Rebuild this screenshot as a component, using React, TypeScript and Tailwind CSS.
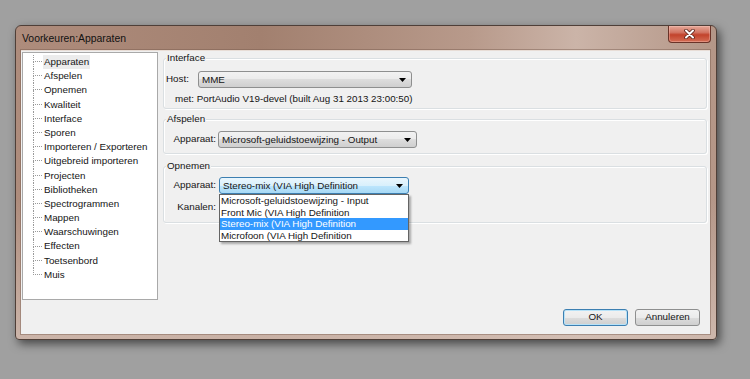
import React from 'react'

const TREE_ITEMS = [
  'Apparaten',
  'Afspelen',
  'Opnemen',
  'Kwaliteit',
  'Interface',
  'Sporen',
  'Importeren / Exporteren',
  'Uitgebreid importeren',
  'Projecten',
  'Bibliotheken',
  'Spectrogrammen',
  'Mappen',
  'Waarschuwingen',
  'Effecten',
  'Toetsenbord',
  'Muis',
]

const RECORD_DEVICES = [
  'Microsoft-geluidstoewijzing - Input',
  'Front Mic (VIA High Definition',
  'Stereo-mix (VIA High Definition',
  'Microfoon (VIA High Definition',
]

// ── Root ─────────────────────────────────────────────────────────────────────

export default function App() {
  return (
    <div className="w-[750px] h-[379px] bg-[#a0a0a0] pt-[25px] pl-[15px] font-['Liberation_Sans',Arial,sans-serif] text-[9.8px] text-[#151515] overflow-hidden">
      <div className="w-[702px] h-[315px] flex flex-col rounded-t-[6px] rounded-b-[4px] border border-[#4f3f38] bg-[linear-gradient(180deg,rgba(0,0,0,0)_55%,rgba(214,194,184,0.75)),linear-gradient(90deg,#ae8c7c,#a2806f_35%,#b89a8b_65%,#cbb4a8_80%,#b49687)] shadow-[3px_4px_10px_rgba(0,0,0,0.55)]">
        {/* Title bar */}
        <div className="h-[24px] flex justify-between shrink-0">
          <div className="pl-[6px] pt-[5px] text-[10.4px] text-[#111]">Voorkeuren:Apparaten</div>
          <CloseButton />
        </div>

        {/* Client area */}
        <div className="ml-[5px] mr-[6px] mb-[5px] flex-1 flex flex-col bg-[#f0f0f0] border-t border-[#e8ddd6] pl-[1px] shadow-[0_0_0_1px_rgba(120,90,78,0.45)]">
          <div className="flex">
            <Tree />

            <div className="ml-[5px] w-[544px] flex flex-col">
              {/* Interface */}
              <GroupBox label="Interface" className="mt-[7px] h-[51px]">
                <div className="flex items-center mt-[7px] pl-[2px]">
                  <span className="w-[32px]">Host:</span>
                  <Combo value="MME" className="w-[214px]" />
                </div>
                <div className="mt-[5px] pl-[11px] leading-[12px]">
                  met: PortAudio V19-devel (built Aug 31 2013 23:00:50)
                </div>
              </GroupBox>

              {/* Afspelen */}
              <GroupBox label="Afspelen" className="mt-[10px] h-[35px]">
                <div className="flex items-center mt-[6px]">
                  <span className="w-[52px] text-right">Apparaat:</span>
                  <Combo
                    value="Microsoft-geluidstoewijzing - Output"
                    className="ml-[2px] w-[199px]"
                  />
                </div>
              </GroupBox>

              {/* Opnemen */}
              <GroupBox label="Opnemen" className="mt-[12px] h-[57px]">
                <div className="flex items-center mt-[5px]">
                  <span className="w-[52px] text-right">Apparaat:</span>
                  <div className="relative ml-[3px]">
                    <Combo
                      value="Stereo-mix (VIA High Definition"
                      className="w-[190px]"
                      focused
                    />
                    <DropList />
                  </div>
                </div>
                <div className="flex items-center mt-[5px]">
                  <span className="w-[52px] text-right">Kanalen:</span>
                  <Combo value="" className="ml-[3px] w-[190px]" />
                </div>
              </GroupBox>
            </div>
          </div>

          {/* Buttons */}
          <div className="mt-auto mb-[8px] mr-[10px] flex justify-end gap-[7px]">
            <DialogButton label="OK" isDefault />
            <DialogButton label="Annuleren" />
          </div>
        </div>
      </div>
    </div>
  )
}

// ── Window chrome ────────────────────────────────────────────────────────────

function CloseButton() {
  return (
    <div className="mr-[5px] w-[43px] h-[17px] flex items-center justify-center rounded-b-[4px] border border-t-0 border-[#6a3328] bg-[linear-gradient(180deg,#e6a898,#d27563_40%,#c2432c_55%,#d46d55)] shadow-[inset_0_0_0_1px_rgba(255,210,200,0.35)]">
      <svg width="11" height="10" viewBox="0 0 11 10">
        <path d="M2 1.5l7 7M9 1.5l-7 7" stroke="#5b2218" strokeWidth="3.6" strokeLinecap="round" />
        <path d="M2 1.5l7 7M9 1.5l-7 7" stroke="#ffffff" strokeWidth="2" strokeLinecap="round" />
      </svg>
    </div>
  )
}

// ── Tree ─────────────────────────────────────────────────────────────────────

function Tree() {
  return (
    <div className="mt-[1px] w-[136px] h-[248px] bg-white border border-[#a9a9a9] pt-[2px] pl-[10px]">
      {TREE_ITEMS.map((item, i) => {
        const last = i === TREE_ITEMS.length - 1
        return (
          <div key={item} className="flex h-[14.2px]">
            <div className="w-[9px] flex flex-col">
              <div className="h-1/2 border-l border-b border-dotted border-[#9a9a9a]" />
              <div className={last ? 'h-1/2' : 'h-1/2 border-l border-dotted border-[#9a9a9a]'} />
            </div>
            <span
              className={`ml-[1px] px-[1px] leading-[14.2px] whitespace-nowrap ${
                i === 0 ? 'bg-[#ececec]' : ''
              }`}
            >
              {item}
            </span>
          </div>
        )
      })}
    </div>
  )
}

// ── Controls ─────────────────────────────────────────────────────────────────

function GroupBox({
  label,
  className,
  children,
}: {
  label: string
  className: string
  children: React.ReactNode
}) {
  return (
    <div
      className={`flex flex-col rounded-[3px] border border-[#dadfe2] shadow-[inset_1px_1px_0_#ffffff,1px_1px_0_#ffffff] ${className}`}
    >
      <div className="-mt-[7px] ml-[2px] self-start h-[12px] leading-[12px] px-[1px] bg-[#f0f0f0]">
        {label}
      </div>
      {children}
    </div>
  )
}

function Combo({
  value,
  className,
  focused = false,
}: {
  value: string
  className: string
  focused?: boolean
}) {
  return (
    <div
      className={`h-[17px] flex items-center justify-between pl-[3px] pr-[5px] rounded-[3px] border ${
        focused
          ? 'border-[#3c7fb1] bg-[linear-gradient(180deg,#eaf6fd,#d9f0fc_50%,#bee6fd_50%,#a7d9f5)]'
          : 'border-[#8e8f8f] bg-[linear-gradient(180deg,#f2f2f2,#ebebeb_50%,#dddddd_50%,#cfcfcf)]'
      } ${className}`}
    >
      <span className="whitespace-nowrap leading-[12px]">{value}</span>
      <svg width="7" height="4" viewBox="0 0 7 4" className="shrink-0">
        <path d="M0 0h7L3.5 4z" fill="#000" />
      </svg>
    </div>
  )
}

function DropList() {
  return (
    <div className="absolute left-0 top-full z-10 w-[190px] bg-white border border-[#646464] shadow-[2px_2px_2px_rgba(0,0,0,0.3)]">
      {RECORD_DEVICES.map((d, i) => (
        <div
          key={d}
          className={`h-[11.5px] leading-[11.5px] pl-[1px] whitespace-nowrap ${
            i === 2 ? 'bg-[#3399ff] text-white' : ''
          }`}
        >
          {d}
        </div>
      ))}
    </div>
  )
}

function DialogButton({ label, isDefault = false }: { label: string; isDefault?: boolean }) {
  return (
    <div
      className={`w-[65px] h-[17px] flex items-center justify-center rounded-[3px] border bg-[linear-gradient(180deg,#f2f2f2,#ebebeb_50%,#dddddd_50%,#cfcfcf)] ${
        isDefault
          ? 'border-[#3c7fb1] shadow-[inset_0_0_0_1px_#b7e2f8]'
          : 'border-[#8e8f8f]'
      }`}
    >
      {label}
    </div>
  )
}
